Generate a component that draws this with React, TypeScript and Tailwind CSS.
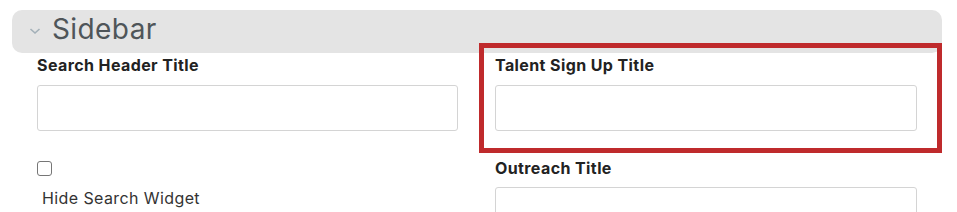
import React from "react";

export default function App() {
  const font = { fontFamily: "Inter, 'Noto Sans', sans-serif" };
  return (
    <div className="relative w-[957px] h-[212px] overflow-hidden bg-white" style={font}>
      <div className="ml-[12px] mr-[15px] mt-[10px] h-[43px] rounded-[10px] bg-[#e4e4e4] flex items-center pl-[17px]">
        <svg width="12" height="8" viewBox="0 0 12 8" className="-mt-[2px]">
          <path d="M1.5 2 L6 6 L10.5 2" fill="none" stroke="#a3b0b8" strokeWidth="1.6" />
        </svg>
        <span className="ml-[11px] -mt-[6px] text-[28px] leading-none text-[#4f5559] tracking-[0.4px]">Sidebar</span>
      </div>
      <div className="flex gap-[37px] px-[37px]">
        <div className="w-[421px] flex flex-col">
          <label className="h-[24px] text-[16px] leading-[24px] font-bold text-[#222] tracking-[0.4px]">Search Header Title</label>
          <div className="mt-[8px] h-[46px] rounded-[3px] border border-[#d4d4d4] bg-white" />
          <div className="mt-[30px] w-[15px] h-[15px] rounded-[3px] border border-[#767676] bg-white" />
          <div className="mt-[10px] ml-[5px] text-[16px] leading-[24px] text-[#333] tracking-[0.4px]">Hide Search Widget</div>
        </div>
        <div className="w-[422px] flex flex-col">
          <label className="h-[24px] text-[16px] leading-[24px] font-bold text-[#222] tracking-[0.4px]">Talent Sign Up Title</label>
          <div className="mt-[8px] h-[46px] rounded-[3px] border border-[#d4d4d4] bg-white" />
          <label className="mt-[25px] h-[24px] text-[16px] leading-[24px] font-bold text-[#222] tracking-[0.4px]">Outreach Title</label>
          <div className="mt-[7px] h-[46px] rounded-[3px] border border-[#d4d4d4] bg-white" />
        </div>
      </div>
      <div className="absolute left-[479px] top-[43px] w-[463px] h-[110px] border-[5px] border-[#bf2a2c]" />
    </div>
  );
}
